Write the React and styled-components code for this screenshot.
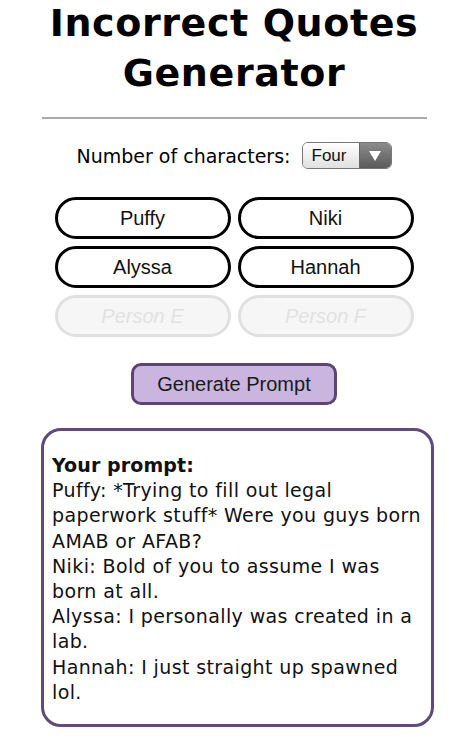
import styled, { createGlobalStyle } from "styled-components";

const GlobalStyle = createGlobalStyle`
  html, body {
    margin: 0;
    padding: 0;
    background: #ffffff;
  }
`;

const Page = styled.div`
  width: 468px;
  display: flex;
  flex-direction: column;
  align-items: center;
  font-family: "DejaVu Sans", Verdana, sans-serif;
  color: #000;
`;

const Title = styled.h1`
  margin: 3px 0 0;
  display: flex;
  flex-direction: column;
  align-items: center;
  gap: 10px;
  font-family: "DejaVu Sans", Verdana, sans-serif;
  font-weight: bold;
  font-size: 38px;
  line-height: 40px;
  letter-spacing: 0.6px;
  text-align: center;
`;

const Divider = styled.hr`
  width: 385px;
  margin: 24px 0 0;
  border: none;
  border-top: 2px solid #aaaaaa;
`;

const CountRow = styled.div`
  display: flex;
  align-items: center;
  gap: 11px;
  margin-top: 23px;
  font-size: 19px;
`;

const SelectBox = styled.div`
  display: flex;
  width: 90px;
  height: 27px;
  box-sizing: border-box;
  border: 1px solid #777;
  border-radius: 6px;
  overflow: hidden;
  font-family: "Liberation Sans", Arial, sans-serif;
  font-size: 17px;
`;

const SelectValue = styled.div`
  flex: 1;
  display: flex;
  align-items: center;
  padding-left: 9px;
  background: linear-gradient(#ffffff, #e0e0e0);
  color: #111;
`;

const SelectArrow = styled.div`
  width: 31px;
  display: flex;
  align-items: center;
  justify-content: center;
  background: linear-gradient(#8c8c8c, #5a5a5a);
  border-left: 1px solid #666;
`;

const NameGrid = styled.div`
  display: grid;
  grid-template-columns: 176px 176px;
  column-gap: 7px;
  row-gap: 7px;
  margin-top: 28px;
`;

const NameButton = styled.div`
  height: 42px;
  box-sizing: border-box;
  border: 3px solid ${(p) => (p.$off ? "#e0e0e0" : "#000")};
  border-radius: 21px;
  background: ${(p) => (p.$off ? "#f6f6f6" : "#fff")};
  display: flex;
  align-items: center;
  justify-content: center;
  font-family: "Liberation Sans", Arial, sans-serif;
  font-size: 20px;
  font-style: ${(p) => (p.$off ? "italic" : "normal")};
  color: ${(p) => (p.$off ? "#e2e2e2" : "#111")};
`;

const GenerateButton = styled.div`
  margin-top: 26px;
  width: 206px;
  height: 42px;
  box-sizing: border-box;
  border: 3px solid #5b4476;
  border-radius: 10px;
  background: #c9b5de;
  display: flex;
  align-items: center;
  justify-content: center;
  font-family: "Liberation Sans", Arial, sans-serif;
  font-size: 20px;
  color: #1a1a1a;
`;

const PromptBox = styled.div`
  margin-top: 23px;
  margin-left: 7px;
  width: 393px;
  box-sizing: border-box;
  border: 3px solid #5d4b7b;
  border-radius: 20px;
  padding: 22px 8px 19px 8px;
  font-size: 19px;
  line-height: 25.2px;
  letter-spacing: 0.38px;
  color: #111;
`;

const PromptHead = styled.div`
  font-weight: bold;
  letter-spacing: 0.1px;
`;

const names = [
  { label: "Puffy" },
  { label: "Niki" },
  { label: "Alyssa" },
  { label: "Hannah" },
  { label: "Person E", off: true },
  { label: "Person F", off: true },
];

const lines = [
  "Puffy: *Trying to fill out legal paperwork stuff* Were you guys born AMAB or AFAB?",
  "Niki: Bold of you to assume I was born at all.",
  "Alyssa: I personally was created in a lab.",
  "Hannah: I just straight up spawned lol.",
];

export default function App() {
  return (
    <Page>
      <GlobalStyle />
      <Title>
        <span>Incorrect Quotes</span>
        <span>Generator</span>
      </Title>
      <Divider />
      <CountRow>
        <span>Number of characters:</span>
        <SelectBox>
          <SelectValue>Four</SelectValue>
          <SelectArrow>
            <svg width="12" height="10" viewBox="0 0 12 10">
              <path d="M0 0 L12 0 L6 10 Z" fill="#fff" />
            </svg>
          </SelectArrow>
        </SelectBox>
      </CountRow>
      <NameGrid>
        {names.map((n) => (
          <NameButton key={n.label} $off={n.off}>
            {n.label}
          </NameButton>
        ))}
      </NameGrid>
      <GenerateButton>Generate Prompt</GenerateButton>
      <PromptBox>
        <PromptHead>Your prompt:</PromptHead>
        {lines.map((l) => (
          <div key={l}>{l}</div>
        ))}
      </PromptBox>
    </Page>
  );
}
